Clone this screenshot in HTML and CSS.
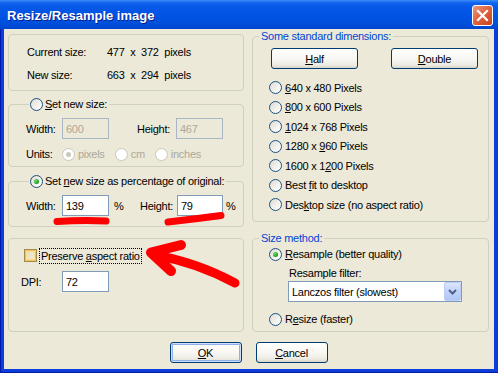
FILE: index.html
```html
<!DOCTYPE html>
<html lang="en">
<head>
    <meta charset="UTF-8">
    <meta name="viewport" content="width=device-width, initial-scale=1.0">
    <title>Resize/Resample image</title>
    <link rel="stylesheet" href="styles.css">
</head>
<body>

    <div class="window">
        <div class="titlebar">
            <span class="title">Resize/Resample image</span>
            <span class="close">
                <svg width="13" height="13" viewBox="0 0 13 13"><path d="M2 2 L11 11 M11 2 L2 11" stroke="#fff" stroke-width="2.2" stroke-linecap="square"/></svg>
            </span>
        </div>

        <div class="client">
            <div class="columns">
                <div class="col col-left">
                    <div class="group info">
                        <div class="info-row"><span class="info-label">Current size:</span><span class="info-value">477  x  372  pixels</span></div>
                        <div class="info-row"><span class="info-label">New size:</span><span class="info-value">663  x  294  pixels</span></div>
                    </div>

                    <fieldset class="group group-size">
                        <legend class="legend-radio"><span class="radio"></span><span><u>S</u>et new size:</span></legend>
                        <div class="field-row">
                            <span class="lbl lbl-w">Width:</span><input class="edit" type="text" value="600" disabled>
                            <span class="lbl lbl-h">Height:</span><input class="edit" type="text" value="467" disabled>
                        </div>
                        <div class="units-row">
                            <span class="lbl lbl-w">Units:</span>
                            <span class="opt opt-dis"><span class="radio radio-dis on"></span>pixels</span>
                            <span class="opt opt-dis"><span class="radio radio-dis"></span>cm</span>
                            <span class="opt opt-dis"><span class="radio radio-dis"></span>inches</span>
                        </div>
                    </fieldset>

                    <fieldset class="group group-pct">
                        <legend class="legend-radio"><span class="radio on"></span><span>Set <u>n</u>ew size as percentage of original:</span></legend>
                        <div class="field-row">
                            <span class="lbl lbl-w">Width:</span><input class="edit" type="text" value="139"><span class="pct">%</span>
                            <span class="lbl lbl-h2">Height:</span><input class="edit edit-narrow" type="text" value="79"><span class="pct pct-last">%</span>
                        </div>
                    </fieldset>

                    <div class="group group-opts">
                        <div class="check-row">
                            <span class="checkbox"></span>
                            <span class="focus">Preserve <u>a</u>spect ratio</span>
                        </div>
                        <div class="dpi-row">
                            <span class="lbl lbl-dpi">DPI:</span><input class="edit" type="text" value="72">
                        </div>
                    </div>
                </div>

                <div class="col col-right">
                    <fieldset class="group group-dims">
                        <legend class="legend-text">Some standard dimensions:</legend>
                        <div class="dim-buttons">
                            <button class="btn btn-dim"><u>H</u>alf</button>
                            <button class="btn btn-dim"><u>D</u>ouble</button>
                        </div>
                        <div class="dim-list">
                            <div class="opt opt-dim"><span class="radio"></span><span><u>6</u>40 x 480 Pixels</span></div>
                            <div class="opt opt-dim"><span class="radio"></span><span><u>8</u>00 x 600 Pixels</span></div>
                            <div class="opt opt-dim"><span class="radio"></span><span><u>1</u>024 x 768 Pixels</span></div>
                            <div class="opt opt-dim"><span class="radio"></span><span>1280 x <u>9</u>60 Pixels</span></div>
                            <div class="opt opt-dim"><span class="radio"></span><span>1600 x 1<u>2</u>00 Pixels</span></div>
                            <div class="opt opt-dim"><span class="radio"></span><span>Best <u>f</u>it to desktop</span></div>
                            <div class="opt opt-dim"><span class="radio"></span><span>Des<u>k</u>top size (no aspect ratio)</span></div>
                        </div>
                    </fieldset>

                    <fieldset class="group group-method">
                        <legend class="legend-text">Size method:</legend>
                        <div class="method">
                            <div class="opt opt-method"><span class="radio on"></span><span><u>R</u>esample (better quality)</span></div>
                            <div class="filter-label">Resample filter:</div>
                            <div class="combo">
                                <span>Lanczos filter (slowest)</span>
                                <span class="combo-btn">
                                    <svg width="9" height="6" viewBox="0 0 9 6"><path d="M1 1 L4.5 4.5 L8 1" fill="none" stroke="#4D6185" stroke-width="2"/></svg>
                                </span>
                            </div>
                            <div class="opt opt-method opt-resize"><span class="radio"></span><span>R<u>e</u>size (faster)</span></div>
                        </div>
                    </fieldset>
                </div>
            </div>

            <div class="actions">
                <button class="btn btn-action btn-default"><u>O</u>K</button>
                <button class="btn btn-action"><u>C</u>ancel</button>
            </div>
        </div>

        <!-- red marker scribbles drawn over the dialog -->
        <svg class="markup" width="498" height="373" viewBox="0 0 498 373">
            <g fill="none" stroke="#FF0000" stroke-linecap="round" stroke-linejoin="round">
                <path d="M57 221.5 Q82 220 106 221" stroke-width="7"/>
                <path d="M168 222 Q195 219 221 215.5" stroke-width="7"/>
                <path d="M181 245 L151 252.5 L171 271" stroke-width="10"/>
                <path d="M154 255 Q196 262 235 283" stroke-width="9"/>
            </g>
        </svg>
    </div>

</body>
</html>
```

FILE: styles.css
```css
* {
    box-sizing: border-box;
}

body {
    margin: 0;
    font-family: "Liberation Sans", Arial, sans-serif;
    font-size: 11px;
    letter-spacing: -0.25px;
    color: #000000;
    background: #ffffff;
}

.window {
    position: relative;
    width: 498px;
    height: 373px;
    display: flex;
    flex-direction: column;
    background: #0A3DD9;
    box-shadow: inset 1px 0 0 #0019A8, inset 0 -1px 0 #001C9E;
    overflow: hidden;
}

.titlebar {
    flex: none;
    height: 29px;
    display: flex;
    align-items: center;
    justify-content: space-between;
    padding: 0 5px 0 7px;
    background: linear-gradient(to bottom, #3C8EF8 0px, #0F62EC 3px, #0558E8 7px, #0054E3 16px, #0050DC 23px, #0045CF 29px);
}

.title {
    color: #ffffff;
    font-weight: bold;
    font-size: 13px;
    letter-spacing: 0;
    text-shadow: 1px 1px 0 #0A1D8C;
    margin-top: 2px;
}

.close {
    width: 21px;
    height: 21px;
    margin-top: 2px;
    display: flex;
    align-items: center;
    justify-content: center;
    border: 1px solid #ffffff;
    border-radius: 3px;
    background: linear-gradient(135deg, #EB9A80 0%, #E0653F 45%, #C4421F 100%);
}

.client {
    flex: 1;
    margin: 0 4px 4px;
    padding: 0 5px 0 4px;
    background: #ECE9D8;
}

.columns {
    display: grid;
    grid-template-columns: 236px 237px;
    column-gap: 8px;
}

.col-left {
    padding-top: 5px;
}

.group {
    margin: 0;
    padding: 0;
    min-width: 0;
    border: 1px solid #D0D0BF;
    border-radius: 4px;
}

legend {
    height: 14px;
    line-height: 14px;
    display: flex;
    align-items: center;
}

.legend-radio {
    margin-left: 20px;
    padding: 0 2px 0 1px;
    gap: 2px;
}

.legend-text {
    margin-left: 6px;
    padding: 0 2px;
    color: #0046D5;
}

/* size info */
.info {
    height: 57px;
    padding: 9px 0 0 18px;
}

.info-row {
    display: flex;
    line-height: 16px;
}

.info-row + .info-row {
    margin-top: 7px;
}

.info-label {
    width: 80px;
}

.info-value {
    white-space: pre;
}

/* new size groups */
.group-size {
    margin-top: 6px;
    height: 70px;
}

.group-pct {
    margin-top: 7px;
    height: 53px;
}

.field-row {
    display: flex;
    align-items: center;
    height: 21px;
    margin: 7px 0 0 17px;
}

.lbl-w {
    width: 36px;
}

.lbl-h {
    width: 39px;
    margin-left: 28px;
}

.lbl-h2 {
    width: 37px;
}

.pct {
    width: 31px;
    padding-left: 5px;
}

.pct-last {
    width: auto;
    padding-left: 3px;
}

.edit {
    width: 47px;
    height: 21px;
    margin: 0;
    padding: 0 3px;
    border: 1px solid #7F9DB9;
    border-radius: 0;
    background: #ffffff;
    font: inherit;
    letter-spacing: inherit;
    color: #000000;
    outline: none;
}

.edit-narrow {
    width: 46px;
}

.edit:disabled {
    background: #ECE9D8;
    border-color: #A9B6C6;
    color: #ACA899;
    -webkit-text-fill-color: #ACA899;
}

.units-row {
    display: flex;
    align-items: center;
    height: 18px;
    margin: 6px 0 0 17px;
}

.opt {
    display: flex;
    align-items: center;
    gap: 3px;
}

.opt-dis {
    color: #ACA899;
    margin-right: 10px;
}

/* radio buttons and checkbox */
.radio {
    position: relative;
    flex: none;
    width: 13px;
    height: 13px;
    border: 1px solid #1C5180;
    border-radius: 50%;
    background: linear-gradient(135deg, #DCDAD3 0%, #F4F3EE 60%, #FFFFFF 100%);
}

.radio.on::after {
    content: "";
    position: absolute;
    left: 3px;
    top: 3px;
    width: 5px;
    height: 5px;
    border-radius: 50%;
    background: radial-gradient(circle at 35% 35%, #6EE06A 0%, #21A121 60%, #168016 100%);
}

.radio-dis {
    border-color: #CAC8BB;
    background: #ffffff;
}

.radio-dis.on::after {
    background: #CAC8BB;
}

.group-opts {
    margin-top: 11px;
    height: 94px;
    padding: 10px 0 0 12px;
}

.check-row {
    display: flex;
    align-items: center;
    height: 13px;
    margin-left: 3px;
    gap: 3px;
}

.checkbox {
    flex: none;
    width: 13px;
    height: 13px;
    border: 1px solid #9E8A55;
    background: linear-gradient(135deg, #E0D9C0, #F3EEDC);
    box-shadow: inset 0 0 0 1px #F8C155, inset 0 0 0 2px #FADC8E;
}

.focus {
    line-height: 14px;
    padding: 0 1px;
    outline: 1px dotted #000000;
}

.dpi-row {
    display: flex;
    align-items: center;
    margin-top: 9px;
}

.lbl-dpi {
    width: 41px;
}

/* right column */
.group-dims {
    height: 193px;
}

.dim-buttons {
    display: flex;
    gap: 33px;
    margin: 5px 0 0 18px;
}

.dim-list {
    margin-top: 9px;
    padding-left: 16px;
}

.opt-dim {
    height: 19.5px;
}

.group-method {
    margin-top: 9px;
    height: 101px;
}

.method {
    padding-left: 16px;
}

.opt-method {
    height: 18px;
}

.filter-label {
    margin: 3px 0 0 20px;
    line-height: 14px;
}

.combo {
    display: flex;
    align-items: center;
    width: 174px;
    height: 21px;
    margin: 1px 0 0 19px;
    padding-left: 3px;
    border: 1px solid #7F9DB9;
    background: #ffffff;
}

.combo-btn {
    margin-left: auto;
    width: 17px;
    height: 19px;
    display: flex;
    align-items: center;
    justify-content: center;
    border: 1px solid #BBCDF5;
    border-radius: 2px;
    background: linear-gradient(to bottom, #DCE6FD, #C1D3FB 50%, #B1C6F5);
}

.opt-resize {
    margin-top: 8px;
}

/* buttons */
.btn {
    height: 21px;
    margin: 0;
    padding: 0;
    border: 1px solid #003C74;
    border-radius: 3px;
    background: linear-gradient(to bottom, #FFFFFF 0%, #F7F6F1 55%, #ECEAE2 85%, #D8D3C6 100%);
    font: inherit;
    letter-spacing: inherit;
    color: #000000;
    cursor: pointer;
}

.btn-dim {
    width: 87px;
}

.actions {
    display: flex;
    justify-content: center;
    gap: 14px;
    margin-top: 10px;
}

.btn-action {
    width: 72px;
}

.btn-default {
    box-shadow: inset 0 0 0 1px #CEE0FA, inset 0 0 0 2px #8FB1E8;
}

.markup {
    position: absolute;
    left: 0;
    top: 0;
    pointer-events: none;
}
```
